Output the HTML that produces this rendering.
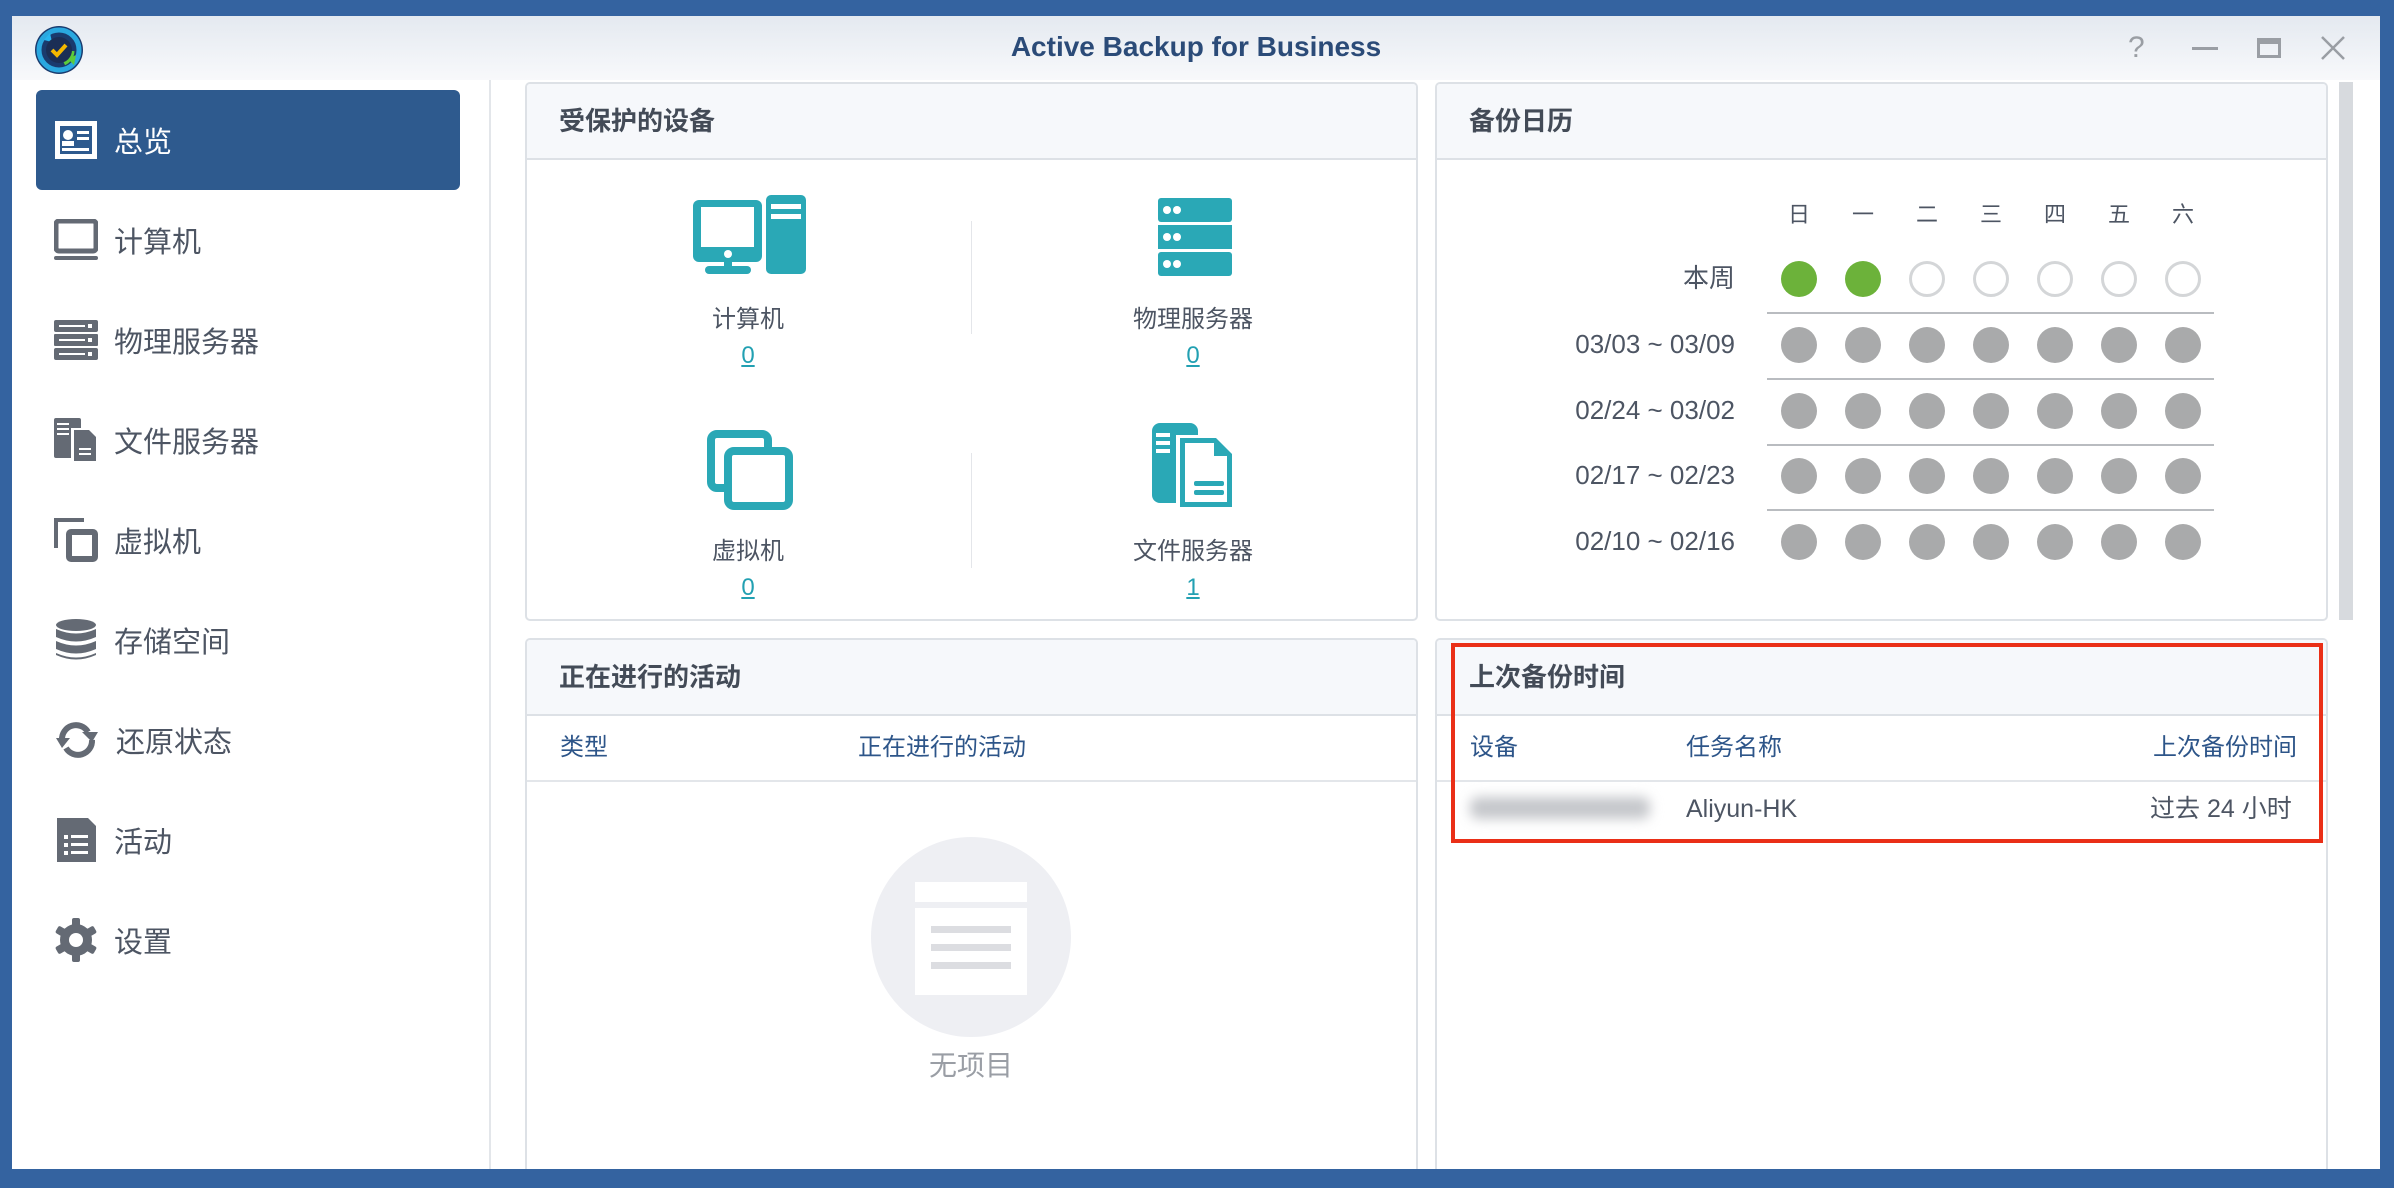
<!DOCTYPE html>
<html><head><meta charset="utf-8"><style>
*{margin:0;padding:0;box-sizing:border-box}
html,body{width:2394px;height:1188px;overflow:hidden}
body{background:#3463a0;font-family:"Liberation Sans","Noto Sans CJK SC",sans-serif;position:relative}
.abs{position:absolute}
.win{left:12px;top:16px;width:2368px;height:1154px;background:#fff;overflow:hidden}
.title{left:0;top:0;width:2368px;height:64px;background:linear-gradient(#e4e9f0,#f8f9fb)}
.side{left:0;top:64px;width:479px;height:1090px;background:#fff;border-right:2px solid #e3e6ea}
.item{position:absolute;left:24px;width:424px;height:100px;color:#4d5563;font-size:29px;display:flex;align-items:center}
.item svg{margin-left:18px;margin-right:16px}
.item.sel{background:#2e5a8e;color:#fff;border-radius:6px}
.panel{position:absolute;border:2px solid #dde1e6;border-radius:5px;background:#fff;overflow:hidden}
.ph{height:76px;background:#f6f8fb;border-bottom:2px solid #dde1e6;font-size:26px;font-weight:bold;color:#434b57;padding-left:32px;line-height:74px}
.t{position:absolute;font-size:24px;color:#4d5563;white-space:nowrap;line-height:30px}
.c{transform:translateX(-50%)}
.num{color:#22a0b2;text-decoration:underline}
.dot{position:absolute;width:36px;height:36px;border-radius:50%;background:#a9aaab}
.g{background:#6cb23a}
.o{background:#fff;border:3px solid #d4d6d8}
.hl{position:absolute;height:2px;background:#b9bcc0}
.colh{color:#2d5589}
</style></head><body>
<div class="abs win">
 <div class="abs title">
  <svg class="abs" style="left:22px;top:9px" width="50" height="50" viewBox="0 0 50 50"><circle cx="25" cy="25" r="24" fill="#1a3b6e"/><circle cx="25" cy="25" r="20" fill="none" stroke="#2aa8e0" stroke-width="5"/><path d="M10 15 L16 8 L18 17Z" fill="#27b5f0"/><path d="M38 26 A14 14 0 0 1 30 38" stroke="#5ccb3c" stroke-width="5" fill="none"/><path d="M34 34 L42 30 L40 40Z" fill="#5ccb3c"/><circle cx="25" cy="25" r="13" fill="#1b2e55"/><path d="M18 25 L23 30 L32 20" stroke="#f5b800" stroke-width="4" fill="none"/></svg>
  <div class="abs" style="left:0;width:2368px;top:15px;text-align:center;font-size:28px;font-weight:bold;color:#2b4b78">Active Backup for Business</div>
  <div class="abs" style="left:2116px;top:15px;font-size:30px;color:#9a9ea4">?</div>
  <div class="abs" style="left:2180px;top:31px;width:26px;height:3px;background:#9a9ea4"></div>
  <div class="abs" style="left:2245px;top:22px;width:24px;height:20px;border:3px solid #9a9ea4;border-top-width:6px"></div>
  <svg class="abs" style="left:2308px;top:19px" width="26" height="26"><path d="M2 2L24 24M24 2L2 24" stroke="#9a9ea4" stroke-width="2.5"/></svg>
 </div>
 <div class="abs side">
  <div class="item sel" style="top:10px"><svg width="44" height="40"><rect x="1" y="1" width="42" height="38" fill="#fff"/><rect x="6" y="6" width="32" height="28" fill="#2e5a8e"/><circle cx="14" cy="15" r="5" fill="#fff"/><rect x="8" y="21" width="12" height="5" fill="#fff"/><rect x="23" y="11" width="12" height="3" fill="#fff"/><rect x="23" y="17" width="12" height="3" fill="#fff"/><rect x="8" y="28" width="27" height="3" fill="#fff"/></svg>总览</div>
  <div class="item" style="top:110px"><svg width="44" height="42"><rect x="2" y="2" width="40" height="30" rx="3" fill="none" stroke="#646a74" stroke-width="5"/><rect x="0" y="37" width="44" height="4" rx="2" fill="#646a74"/></svg>计算机</div>
  <div class="item" style="top:210px"><svg width="44" height="40"><rect y="0" width="44" height="12" rx="2" fill="#646a74"/><rect y="14" width="44" height="12" rx="1" fill="#646a74"/><rect y="28" width="44" height="12" rx="2" fill="#646a74"/><rect x="5" y="5" width="26" height="2" fill="#fff"/><rect x="5" y="19" width="26" height="2" fill="#fff"/><rect x="5" y="33" width="26" height="2" fill="#fff"/><rect x="34" y="4" width="4" height="4" fill="#fff"/><rect x="34" y="18" width="4" height="4" fill="#fff"/><rect x="34" y="32" width="4" height="4" fill="#fff"/></svg>物理服务器</div>
  <div class="item" style="top:310px"><svg width="44" height="44"><rect x="0" y="0" width="27" height="40" rx="2" fill="#646a74"/><rect x="3" y="5" width="12" height="2" fill="#fff"/><rect x="3" y="10" width="12" height="2" fill="#fff"/><rect x="3" y="15" width="12" height="2" fill="#fff"/><path d="M17 10H36L44 18V44H17Z" fill="#fff"/><path d="M20 12H35L42 19V43H20Z" fill="#646a74"/><rect x="25" y="30" width="12" height="2" fill="#fff"/><rect x="25" y="35" width="12" height="2" fill="#fff"/></svg>文件服务器</div>
  <div class="item" style="top:410px"><svg width="44" height="44"><path d="M2 30V2H30" fill="none" stroke="#646a74" stroke-width="4"/><rect x="15" y="14" width="26" height="27" rx="2" fill="none" stroke="#646a74" stroke-width="6"/></svg>虚拟机</div>
  <div class="item" style="top:510px"><svg width="44" height="44"><ellipse cx="22" cy="7" rx="20" ry="6" fill="#646a74"/><path d="M2 11Q22 20 42 11V19Q22 28 2 19Z" fill="#646a74"/><path d="M2 23Q22 32 42 23V31Q22 40 2 31Z" fill="#646a74"/><path d="M2 35Q22 44 42 35V37Q22 46 2 37Z" fill="#646a74"/></svg>存储空间</div>
  <div class="item" style="top:610px"><svg width="46" height="40"><path d="M8 20A14 14 0 0 1 34 12" fill="none" stroke="#646a74" stroke-width="6"/><path d="M28 12H44L38 22Z" fill="#646a74"/><path d="M38 20A14 14 0 0 1 12 28" fill="none" stroke="#646a74" stroke-width="6"/><path d="M2 18H16L8 28Z" fill="#646a74"/></svg>还原状态</div>
  <div class="item" style="top:710px"><svg width="44" height="44"><path d="M3 0H34L42 8V44H3Z" fill="#646a74"/><rect x="10" y="17" width="4" height="4" fill="#fff"/><rect x="17" y="17" width="17" height="3" fill="#fff"/><rect x="10" y="25" width="4" height="4" fill="#fff"/><rect x="17" y="25" width="17" height="3" fill="#fff"/><rect x="10" y="33" width="4" height="4" fill="#fff"/><rect x="17" y="33" width="17" height="3" fill="#fff"/></svg>活动</div>
  <div class="item" style="top:810px"><svg width="44" height="44" viewBox="0 0 44 44"><g fill="#646a74"><circle cx="22" cy="22" r="16"/><rect x="18" y="0" width="8" height="44" rx="2"/><rect x="18" y="0" width="8" height="44" rx="2" transform="rotate(60 22 22)"/><rect x="18" y="0" width="8" height="44" rx="2" transform="rotate(120 22 22)"/></g><circle cx="22" cy="22" r="7" fill="#fff"/></svg>设置</div>
 </div>
</div>

<!-- panel 1 -->
<div class="panel" style="left:525px;top:82px;width:893px;height:539px"><div class="ph">受保护的设备</div></div>
<svg class="abs" style="left:693px;top:195px" width="113" height="80"><rect x="0" y="5" width="69" height="62" rx="6" fill="#2aa8b6"/><rect x="8" y="12" width="53" height="40" fill="#fff"/><circle cx="35" cy="59" r="4" fill="#fff"/><rect x="31" y="67" width="8" height="6" fill="#2aa8b6"/><rect x="12" y="71" width="46" height="8" rx="4" fill="#2aa8b6"/><rect x="73" y="0" width="40" height="79" rx="5" fill="#2aa8b6"/><rect x="78" y="9" width="30" height="5" fill="#fff"/><rect x="78" y="19" width="30" height="5" fill="#fff"/></svg>
<div class="t c" style="left:748px;top:305px">计算机</div>
<div class="t c num" style="left:748px;top:341px">0</div>
<div class="abs" style="left:971px;top:221px;width:1px;height:113px;background:#e4e6ea"></div>
<svg class="abs" style="left:1158px;top:198px" width="74" height="80"><rect y="0" width="74" height="24" rx="3" fill="#2aa8b6"/><rect y="27" width="74" height="24" fill="#2aa8b6"/><rect y="54" width="74" height="24" rx="3" fill="#2aa8b6"/><circle cx="9" cy="12" r="4" fill="#fff"/><circle cx="19" cy="12" r="4" fill="#fff"/><circle cx="9" cy="39" r="4" fill="#fff"/><circle cx="19" cy="39" r="4" fill="#fff"/><circle cx="9" cy="66" r="4" fill="#fff"/><circle cx="19" cy="66" r="4" fill="#fff"/></svg>
<div class="t c" style="left:1193px;top:305px">物理服务器</div>
<div class="t c num" style="left:1193px;top:341px">0</div>
<svg class="abs" style="left:707px;top:430px" width="86" height="80"><rect x="4" y="4" width="57" height="54" rx="6" fill="none" stroke="#2aa8b6" stroke-width="8"/><rect x="21" y="21" width="61" height="55" rx="6" fill="#fff" stroke="#2aa8b6" stroke-width="8"/></svg>
<div class="t c" style="left:748px;top:537px">虚拟机</div>
<div class="t c num" style="left:748px;top:573px">0</div>
<div class="abs" style="left:971px;top:453px;width:1px;height:115px;background:#e4e6ea"></div>
<svg class="abs" style="left:1152px;top:423px" width="84" height="88"><rect x="0" y="0" width="46" height="80" rx="8" fill="#2aa8b6"/><rect x="4" y="10" width="14" height="4" fill="#fff"/><rect x="4" y="18" width="14" height="4" fill="#fff"/><rect x="4" y="26" width="14" height="4" fill="#fff"/><path d="M24 12H66L84 30V88H24Z" fill="#fff"/><path d="M28 15H64L80 31V84H28Z" fill="#2aa8b6"/><path d="M33 20H62V33H75V79H33Z" fill="#fff"/><rect x="42" y="58" width="30" height="5" rx="2" fill="#2aa8b6"/><rect x="42" y="67" width="30" height="5" rx="2" fill="#2aa8b6"/></svg>
<div class="t c" style="left:1193px;top:537px">文件服务器</div>
<div class="t c num" style="left:1193px;top:573px">1</div>

<!-- panel 2 -->
<div class="panel" style="left:1435px;top:82px;width:893px;height:539px"><div class="ph">备份日历</div></div>
<div class="abs" style="left:2339px;top:82px;width:14px;height:538px;background:#d7dade"></div>
<div id="cal"></div>

<!-- panel 3 -->
<div class="panel" style="left:525px;top:638px;width:893px;height:531px;border-bottom:none;border-radius:5px 5px 0 0"><div class="ph">正在进行的活动</div></div>
<div class="t colh" style="left:560px;top:733px">类型</div>
<div class="t colh" style="left:858px;top:733px">正在进行的活动</div>
<div class="abs" style="left:527px;top:780px;width:889px;height:2px;background:#e3e6ea"></div>
<div class="abs" style="left:871px;top:837px;width:200px;height:200px;border-radius:50%;background:#eeeff3"></div>
<div class="abs" style="left:915px;top:882px;width:112px;height:113px;background:#fff"></div>
<div class="abs" style="left:915px;top:902px;width:112px;height:6px;background:#eeeff3"></div>
<div class="abs" style="left:931px;top:926px;width:80px;height:7px;background:#dcdde1"></div>
<div class="abs" style="left:931px;top:944px;width:80px;height:7px;background:#dcdde1"></div>
<div class="abs" style="left:931px;top:962px;width:80px;height:7px;background:#dcdde1"></div>
<div class="t c" style="left:971px;top:1048px;font-size:28px;line-height:36px;color:#9a9ea5">无项目</div>

<!-- panel 4 -->
<div class="panel" style="left:1435px;top:638px;width:893px;height:531px;border-bottom:none;border-radius:5px 5px 0 0"><div class="ph">上次备份时间</div></div>
<div class="t colh" style="left:1470px;top:733px">设备</div>
<div class="t colh" style="left:1686px;top:733px">任务名称</div>
<div class="t colh" style="left:2153px;top:733px">上次备份时间</div>
<div class="abs" style="left:1437px;top:780px;width:889px;height:2px;background:#e3e6ea"></div>
<div class="abs" style="left:1470px;top:797px;width:180px;height:22px;background:#c5c7cb;filter:blur(6px);border-radius:8px"></div>
<div class="t" style="left:1686px;top:794px;font-size:25px">Aliyun-HK</div>
<div class="t" style="left:2150px;top:794px;font-size:25px">过去 24 小时</div>
<div class="abs" style="left:1451px;top:643px;width:872px;height:200px;border:4px solid #ea2f17"></div>

<div class="abs" style="left:0;top:1169px;width:2394px;height:19px;background:#3463a0"></div>

<script>
var h='',cols=[1799,1863,1927,1991,2055,2119,2183],days=['日','一','二','三','四','五','六'],rows=[279,345,411,476,542],labels=['本周','03/03 ~ 03/09','02/24 ~ 03/02','02/17 ~ 02/23','02/10 ~ 02/16'];
cols.forEach(function(x,i){h+='<div class="t c" style="left:'+x+'px;top:200px;font-size:22px">'+days[i]+'</div>'});
rows.forEach(function(y,r){h+='<div class="t" style="right:'+(2394-1735)+'px;top:'+(y-16)+'px;font-size:26px">'+labels[r]+'</div>';
cols.forEach(function(x,i){var cl=r==0?(i<2?'dot g':'dot o'):'dot';h+='<div class="'+cl+'" style="left:'+(x-18)+'px;top:'+(y-18)+'px"></div>'});
if(r<4)h+='<div class="hl" style="left:1767px;width:447px;top:'+(y+33)+'px"></div>'});
document.getElementById('cal').innerHTML=h;
</script>
</body></html>
